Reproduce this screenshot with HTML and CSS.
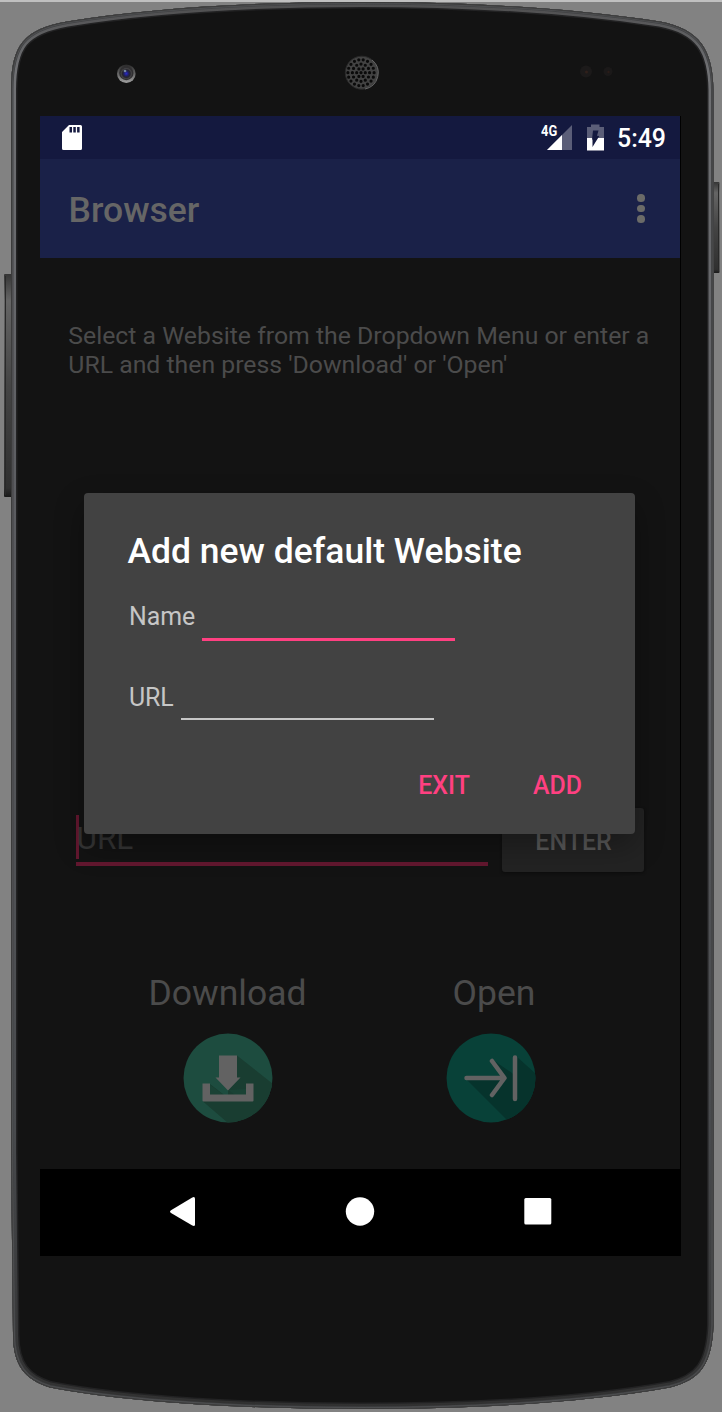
FILE: index.html
```html
<!DOCTYPE html>
<html lang="en">
<head>
<meta charset="utf-8">
<title>Browser</title>
<link rel="stylesheet" href="styles.css">
</head>
<body>
<div class="device">
  <svg class="shell" viewBox="0 0 722 1412" aria-hidden="true">
    <defs>
      <path id="body" d="M11 90C11 45 24 29 67 21.500C150 8 250 2 361 2C470 2 570 8 660 21.500C700 29 713 50 713.500 90V1325C712 1365 700 1380 670 1387.500C590 1402 480 1409 361 1409C250 1409 130 1403 50 1387.500C25 1380 13 1365 13 1335L11 1150Z"/>
      <clipPath id="clip"><use href="#body"/></clipPath>
      <linearGradient id="rim" gradientUnits="userSpaceOnUse" x1="0" y1="0" x2="0" y2="1412">
        <stop offset="0" stop-color="#4c4c4d"/><stop offset=".05" stop-color="#707174"/><stop offset=".35" stop-color="#5c5d61"/><stop offset=".8" stop-color="#484a4d"/><stop offset="1" stop-color="#303030"/>
      </linearGradient>
      <linearGradient id="key" x1="0" y1="0" x2="0" y2="1">
        <stop offset="0" stop-color="#353535"/><stop offset=".12" stop-color="#656565"/><stop offset=".5" stop-color="#444"/><stop offset=".96" stop-color="#303030"/><stop offset="1" stop-color="#191919"/>
      </linearGradient>
      <radialGradient id="lens" cx=".5" cy=".5" r=".5">
        <stop offset="0" stop-color="#2a2ad0"/><stop offset=".45" stop-color="#20205c"/><stop offset=".7" stop-color="#26252c"/><stop offset="1" stop-color="#4c4b4d"/>
      </radialGradient>
      <linearGradient id="ring" x1="0" y1="0" x2="0" y2="1"><stop offset="0" stop-color="#292929"/><stop offset="1" stop-color="#a0a0a0"/></linearGradient>
    </defs>
    <rect width="722" height="2" fill="#c0c0c0"/>
    <rect x="4" y="274" width="8" height="223" rx="1" fill="url(#key)"/>
    <rect x="5" y="276" width="1" height="219" fill="#292929"/>
    <rect x="712" y="182" width="7.500" height="91" rx="1" fill="url(#key)"/>
    <rect x="718" y="184" width="1" height="87" fill="#292929"/>
    <use href="#body" fill="#131313"/>
    <g clip-path="url(#clip)" fill="none">
      <use href="#body" stroke="#222223" stroke-width="13"/>
      <use href="#body" stroke="url(#rim)" stroke-width="10"/>
      <use href="#body" stroke="#424345" stroke-width="5"/>
      <use href="#body" stroke="#606163" stroke-width="3.500" stroke-opacity=".5"/>
      <use href="#body" stroke="#3c3c3c" stroke-width="2"/>
    </g>
    <circle cx="126.300" cy="73.700" r="9.300" fill="url(#ring)"/>
    <circle cx="126.300" cy="73" r="7.200" fill="#302f31"/>
    <circle cx="126.300" cy="73.600" r="5.500" fill="url(#lens)"/>
    <circle cx="125" cy="71" r="1.300" fill="#7484a0"/>
    <circle cx="361.800" cy="72.700" r="16.500" fill="#424242" stroke="#2a2a2a"/>
    <g fill="none" stroke="#0a0a0a" stroke-width="3.200" stroke-linecap="round">
      <circle cx="361" cy="72.700" r="4.300" pathLength="6" stroke-dasharray="0 1"/>
      <circle cx="361" cy="72.700" r="8.600" pathLength="12" stroke-dasharray="0 1"/>
      <circle cx="361" cy="72.700" r="13.100" pathLength="18" stroke-dasharray="0 1"/>
      <path d="M361 72.700h.01"/>
    </g>
    <path d="M372 60A16.500 16.500 0 0 1 365 89" fill="none" stroke="#666" stroke-width="1"/>
    <circle cx="586" cy="71.500" r="6" fill="#1c1a1a"/><circle cx="586.500" cy="72" r="1.500" fill="#30201b"/>
    <circle cx="608" cy="71.500" r="4.500" fill="#1b1919"/><circle cx="608.500" cy="72" r="1.200" fill="#2a1c18"/>
  </svg>

  <main class="screen">
    <header class="status">
      <svg class="sd" viewBox="0 0 20 25"><path fill="#fff" fill-rule="evenodd" d="M7 0H18.500Q20 0 20 1.500V23.500Q20 25 18.500 25H1.500Q0 25 0 23.500V7ZM7.500 2V7.500H10V2ZM11.300 2V7.500H13.800V2ZM15.100 2V7.500H17.600V2Z"/></svg>
      <div class="status-right">
        <span class="network">4G</span>
        <svg class="signal" viewBox="0 0 25 25"><path fill="#5b5e78" d="M25 0V25H0Z"/><path fill="#fff" d="M15 10V25H0Z"/></svg>
        <svg class="battery" viewBox="0 0 17 27"><path fill="#5b5e78" d="M0 3H4V.5H12.500V3H17V14H0Z"/><path fill="#fff" d="M0 14H17V26.500H0Z"/><path fill="#14193f" d="M6 6.500H11.500L10 11.800L12.300 12L5.500 23V15.500H5Z"/></svg>
        <span class="clock">5:49</span>
      </div>
    </header>
    <div class="toolbar">
      <h1 class="app-title">Browser</h1>
      <div class="overflow"><i></i><i></i><i></i></div>
    </div>
    <section class="content">
      <p class="intro">Select a Website from the Dropdown Menu or enter a<br>URL and then press 'Download' or 'Open'</p>
      <div class="address">
        <div class="address-input"><span class="caret"></span><span class="hint">URL</span></div>
        <div class="enter">ENTER</div>
      </div>
      <div class="actions">
        <div class="action">
          <span class="action-label">Download</span>
          <svg class="action-icon" viewBox="0 0 90 90">
            <clipPath id="disc"><circle cx="45" cy="45" r="44.500"/></clipPath>
            <circle cx="45" cy="45" r="44.500" fill="#1d4c3f"/>
            <path clip-path="url(#disc)" fill="#193d31" d="M54 22.500L90 51V90H45L20 68.500L27 51L45 65V46Z"/>
            <path clip-path="url(#disc)" fill="#1d4c3f" d="M27 52V61.500H40ZM34 46L46 57.500L52 62H63V56L45 57Z" fill-opacity=".35"/>
            <path fill="#626262" d="M36 22.500H54V44.500H57.500L45 57.500L32.500 44.500H36ZM19.500 50.500H27V61.500H63V50.500H70.500V67.500Q70.500 68.500 69.500 68.500H20.500Q19.500 68.500 19.500 67.500Z"/>
          </svg>
        </div>
        <div class="action action-open">
          <span class="action-label">Open</span>
          <svg class="action-icon" viewBox="0 0 90 90">
            <circle cx="45" cy="45" r="44.500" fill="#084138"/>
            <path clip-path="url(#disc)" fill="#06332c" d="M20 46L62 88L90 90V41L70 23V45L66 40L47 27L59 45Z"/>
            <path fill="none" stroke="#626262" stroke-width="4.500" stroke-linecap="round" stroke-linejoin="round" d="M20.500 45H58M46 28L58.500 45L46 62M69 24.500V66"/>
          </svg>
        </div>
      </div>
    </section>
    <nav class="navbar">
      <svg class="nav-icons" viewBox="0 0 641 87"><g fill="#fff"><path d="M131 41.200L152.300 28.400Q155 27 155 29.800V55.200Q155 58 152.300 56.600L131 44Q129 42.600 131 41.200Z"/><circle cx="320" cy="42.500" r="14.200"/><rect x="484.300" y="29" width="27" height="26.500" rx="1.500"/></g></svg>
    </nav>

    <div class="dialog" role="dialog">
      <h2 class="dialog-title">Add new default Website</h2>
      <div class="field"><label>Name</label><span class="line line-active"></span></div>
      <div class="field"><label>URL</label><span class="line"></span></div>
      <div class="buttons"><span>EXIT</span><span>ADD</span></div>
    </div>
  </main>
</div>
</body>
</html>
```

FILE: styles.css
```css
* { box-sizing: border-box; }
body {
  margin: 0;
  background: #828282;
  font-family: Roboto, "Liberation Sans", sans-serif;
}
.device {
  position: relative;
  width: 722px;
  height: 1412px;
  padding: 116px 41px 0 40px;
  overflow: hidden;
}
.shell {
  position: absolute;
  inset: 0;
  width: 722px;
  height: 1412px;
}
.screen {
  position: relative;
  display: flex;
  flex-direction: column;
  width: 641px;
  height: 1140px;
  background: #131313;
  border-right: 1px solid #000;
}
.status {
  display: flex;
  justify-content: space-between;
  height: 43px;
  padding: 9px 14px 0 22px;
  background: #14193f;
  color: #fff;
}
.sd { width: 20px; height: 25px; }
.status-right { display: flex; }
.network {
  font-size: 15px;
  font-weight: 700;
  line-height: 13px;
  width: 19px;
  transform: scaleX(.86);
  transform-origin: left;
  margin-right: -13px;
}
.signal { width: 25px; height: 25px; margin-right: 15px; }
.battery { width: 17px; height: 27px; margin: -1px 13px 0 0; }
.clock {
  font-size: 24.900px;
  font-weight: 500;
  line-height: 28px;
}
.toolbar {
  display: flex;
  align-items: center;
  justify-content: space-between;
  height: 99px;
  padding: 2px 35px 0 28.500px;
  background: #1a2148;
}
.app-title {
  margin: 0;
  font-size: 35.500px;
  font-weight: 500;
  line-height: 42px;
  color: #666;
}
.overflow { display: flex; flex-direction: column; gap: 3px; margin-bottom: 2px; }
.overflow i { width: 7.700px; height: 7.700px; border-radius: 50%; background: #6b6b68; }
.content { height: 911px; padding: 63px 0 0; }
.intro {
  height: 58px;
  margin: 0 0 0 28.300px;
  font-size: 24.800px;
  line-height: 29px;
  color: #4b4b4b;
  white-space: nowrap;
}
.address {
  display: flex;
  gap: 14px;
  margin: 429px 36px 0 35.500px;
  height: 64px;
}
.address-input {
  display: flex;
  width: 412.500px;
  height: 58px;
  padding-top: 7px;
  border-bottom: 4px solid #63172f;
}
.caret { width: 3.500px; height: 44px; background: #63172f; }
.hint { margin-left: -2.500px; padding-top: 6px; font-size: 31.500px; line-height: 36px; color: #353535; }
.enter {
  width: 142px;
  height: 64px;
  border-radius: 3px;
  background: #232323;
  box-shadow: 0 1px 3px #0d0d0d;
  color: #595959;
  font-size: 24.900px;
  font-weight: 500;
  line-height: 67px;
  padding-left: 1px;
  text-align: center;
}
.actions { display: flex; margin: 100px 0 0 56.500px; }
.action { display: flex; flex-direction: column; align-items: center; width: 263px; }
.action-label { font-size: 35.500px; line-height: 43px; margin-left: -1px; color: #4b4b4b; }
.action-open .action-label { margin-left: 6px; }
.action-icon { width: 90px; height: 90px; margin-top: 18px; }
.navbar { height: 87px; margin-right: -1px; background: #000; }
.nav-icons { display: block; width: 641px; height: 87px; }
.dialog {
  position: absolute;
  left: 44.400px;
  top: 377px;
  width: 551px;
  height: 341px;
  padding: 37px 44px 0 44.500px;
  border-radius: 4px;
  background: #424242;
  box-shadow: 0 12px 30px rgba(0, 0, 0, .3);
}
.dialog-title {
  margin: 0 0 0 -1.500px;
  font-size: 35.500px;
  font-weight: 500;
  line-height: 42px;
  color: #fff;
  white-space: nowrap;
}
.field {
  display: flex;
  gap: 6.800px;
  height: 51px;
  margin-top: 30px;
  font-size: 24.900px;
  line-height: 30px;
  color: #c6c6c6;
}
.line { width: 253px; height: 37px; border-bottom: 2px solid #c6c6c6; }
.line-active { height: 39px; border-bottom: 3.500px solid #ff4081; }
.buttons {
  display: flex;
  justify-content: flex-end;
  gap: 63px;
  padding-right: 9.500px;
  margin-top: 37px;
  font-size: 24.900px;
  font-weight: 500;
  line-height: 30px;
  color: #ff4081;
}
```
